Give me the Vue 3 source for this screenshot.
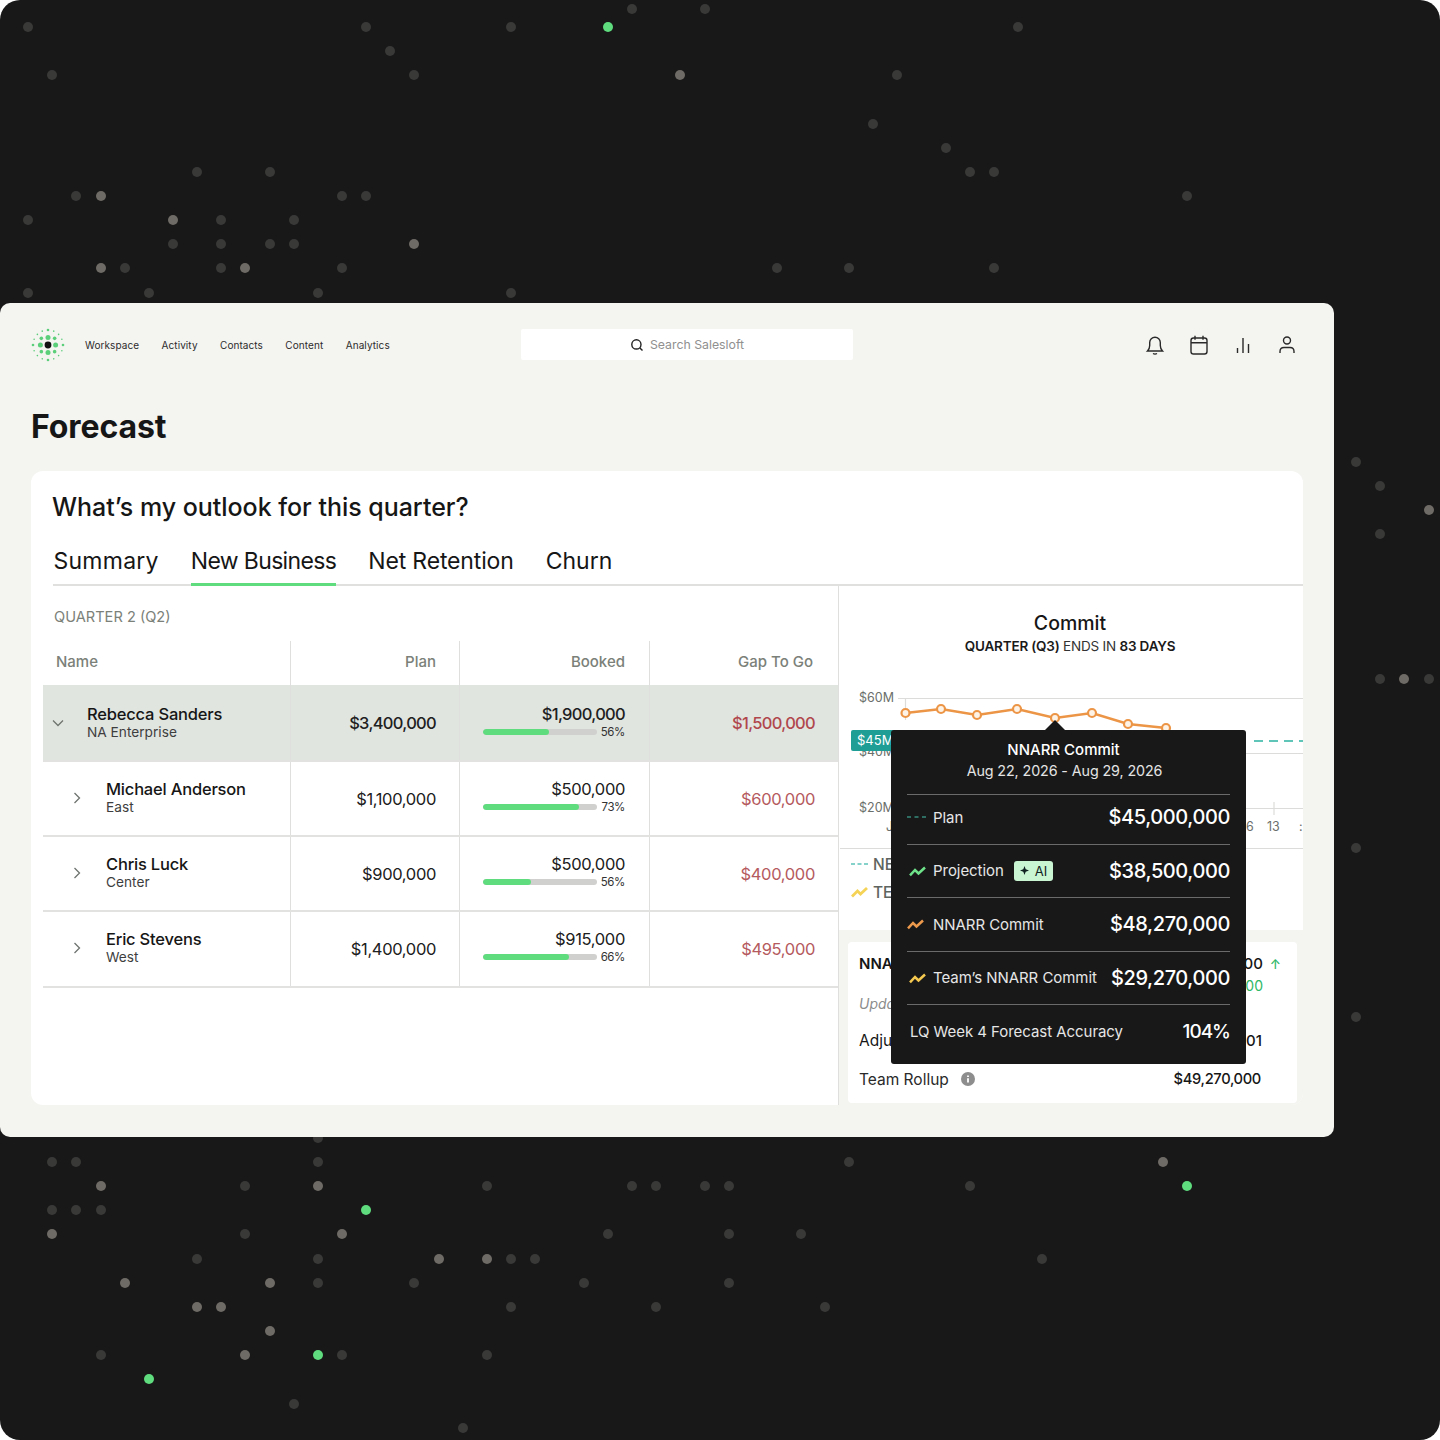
<script setup>
const green = '#5fdd7e'
const dim = [[28,27],[366,27],[511,27],[632,9],[705,9],[1018,27],[390,51],[52,75],[414,75],[897,75],[873,124],[946,148],[197,172],[270,172],[970,172],[994,172],[76,196],[342,196],[366,196],[1187,196],[28,220],[221,220],[294,220],[173,244],[221,244],[270,244],[294,244],[125,268],[221,268],[342,268],[777,268],[849,268],[994,268],[28,293],[149,293],[318,293],[511,293],[1356,462],[1380,486],[1380,534],[1380,679],[1429,679],[1356,848],[1356,1017],[318,1138],[52,1162],[76,1162],[318,1162],[849,1162],[245,1186],[487,1186],[632,1186],[656,1186],[705,1186],[729,1186],[970,1186],[52,1210],[76,1210],[101,1210],[245,1234],[608,1234],[729,1234],[801,1234],[197,1259],[318,1259],[511,1259],[535,1259],[1042,1259],[318,1283],[414,1283],[584,1283],[729,1283],[511,1307],[656,1307],[825,1307],[101,1355],[342,1355],[487,1355],[294,1404],[463,1428]]
const bright = [[680,75],[101,196],[173,220],[414,244],[101,268],[245,268],[1429,510],[1404,679],[1163,1162],[101,1186],[318,1186],[52,1234],[342,1234],[439,1259],[487,1259],[125,1283],[270,1283],[197,1307],[221,1307],[270,1331],[245,1355]]
const greens = [[608,27],[1187,1186],[366,1210],[318,1355],[149,1379]]
const dots = [
  ...dim.map(([x, y]) => ({ x, y, c: '#393938' })),
  ...bright.map(([x, y]) => ({ x, y, c: '#6e6a65' })),
  ...greens.map(([x, y]) => ({ x, y, c: green }))
]

const logoDots = []
for (let i = 0; i < 4; i++) {
  const a = i * Math.PI / 2
  logoDots.push({ x: 17 + 7.6 * Math.cos(a), y: 17 + 7.6 * Math.sin(a), r: 2.5 })
  const b = a + Math.PI / 4
  logoDots.push({ x: 17 + 9.4 * Math.cos(b), y: 17 + 9.4 * Math.sin(b), r: 1.8 })
}
for (let i = 0; i < 16; i++) {
  const a = i * Math.PI / 8
  logoDots.push({ x: 17 + 15 * Math.cos(a), y: 17 + 15 * Math.sin(a), r: i % 4 === 0 ? 1.3 : 0.8 })
}

const nav = ['Workspace', 'Activity', 'Contacts', 'Content', 'Analytics']
const tabs = ['Summary', 'New Business', 'Net Retention', 'Churn']
const rows = [
  { name: 'Rebecca Sanders', sub: 'NA Enterprise', plan: '$3,400,000', booked: '$1,900,000', pct: '56%', fill: 66, gap: '$1,500,000', lead: true },
  { name: 'Michael Anderson', sub: 'East', plan: '$1,100,000', booked: '$500,000', pct: '73%', fill: 96, gap: '$600,000' },
  { name: 'Chris Luck', sub: 'Center', plan: '$900,000', booked: '$500,000', pct: '56%', fill: 48, gap: '$400,000' },
  { name: 'Eric Stevens', sub: 'West', plan: '$1,400,000', booked: '$915,000', pct: '66%', fill: 86, gap: '$495,000' }
]
const points = [[905.5,713],[941,709],[977,715],[1017,709],[1055,718],[1092,713],[1128,724],[1166,728]]
const polyline = points.map(p => p.join(',')).join(' ')
const tipRows = [
  { label: 'Projection', value: '$38,500,000', color: '#6fe38a', nudge: true, ai: true },
  { label: 'NNARR Commit', value: '$48,270,000', color: '#ee9a4d' },
  { label: 'Team’s NNARR Commit', value: '$29,270,000', color: '#f5c94f', nudge: true }
]
</script>

<template>
  <div class="stage">
    <span v-for="(d, i) in dots" :key="i" class="dot" :style="{ left: d.x - 5 + 'px', top: d.y - 5 + 'px', background: d.c }"></span>

    <main class="window">
      <header class="topbar">
        <div class="brand">
          <svg width="34" height="34" viewBox="0 0 34 34" class="logo">
            <circle v-for="(d, i) in logoDots" :key="i" :cx="d.x" :cy="d.y" :r="d.r" fill="#5ccf7a" />
            <circle cx="17" cy="17" r="3.4" fill="#111" />
          </svg>
          <nav class="nav"><a v-for="n in nav" :key="n">{{ n }}</a></nav>
        </div>
        <div class="search">
          <svg width="14" height="14" viewBox="0 0 14 14" fill="none" stroke="#222" stroke-width="1.4"><circle cx="6.4" cy="6.4" r="4.6" /><path d="M9.9 9.9l2.6 2.6" /></svg>
          <span>Search Salesloft</span>
        </div>
        <div class="tools">
          <svg width="22" height="22" viewBox="0 0 22 22" fill="none" stroke="#2a2a2a" stroke-width="1.4"><path d="M3.5 17h15c-1.5-1.5-2.2-3-2.2-5.500V8.500a5.300 5.300 0 0 0-10.600 0v3C5.700 14 5 15.500 3.500 17z" /><path d="M9 19.500q2 1.200 4 0" /></svg>
          <svg width="22" height="22" viewBox="0 0 22 22" fill="none" stroke="#2a2a2a" stroke-width="1.4"><rect x="3" y="4" width="16" height="16" rx="2.5" /><path d="M3 8.800h16M7 1.800v4M15 1.800v4" /></svg>
          <svg width="22" height="22" viewBox="0 0 22 22" fill="none" stroke="#2a2a2a" stroke-width="1.4"><path d="M5.500 14v5M11 4v15M16.500 10v9" /></svg>
          <svg width="22" height="22" viewBox="0 0 22 22" fill="none" stroke="#2a2a2a" stroke-width="1.4"><circle cx="11" cy="6.500" r="3.500" /><path d="M4 19v-1.500q0-4 4-4h6q4 0 4 4V19" /></svg>
        </div>
      </header>

      <h1 class="title">Forecast</h1>

      <section class="card">
        <h2 class="question">What’s my outlook for this quarter?</h2>
        <div class="tabs">
          <span v-for="(t, i) in tabs" :key="t" class="tab" :class="{ active: i === 1 }">{{ t }}</span>
        </div>

        <div class="body">
          <div class="left">
            <div class="quarter">QUARTER 2 (Q2)</div>
            <div class="table">
              <div class="row head">
                <div class="cell name-head">Name</div>
                <div class="cell num">Plan</div>
                <div class="cell num booked-head">Booked</div>
                <div class="cell num gap-head">Gap To Go</div>
              </div>
              <div v-for="r in rows" :key="r.name" class="row" :class="{ lead: r.lead }">
                <div class="cell who">
                  <svg class="chev" width="12" height="12" viewBox="0 0 12 12" fill="none" stroke="#6f746f" stroke-width="1.3">
                    <path :d="r.lead ? 'M1 3.500l5 5 5-5' : 'M3.500 1l5 5-5 5'" />
                  </svg>
                  <div>
                    <div class="who-name">{{ r.name }}</div>
                    <div class="who-sub">{{ r.sub }}</div>
                  </div>
                </div>
                <div class="cell num money">{{ r.plan }}</div>
                <div class="cell booked">
                  <div class="money">{{ r.booked }}</div>
                  <div class="progress">
                    <div class="track"><div class="fill" :style="{ width: r.fill + 'px' }"></div></div>
                    <span class="pct">{{ r.pct }}</span>
                  </div>
                </div>
                <div class="cell num money gap">{{ r.gap }}</div>
              </div>
            </div>
          </div>

          <div class="right">
            <div class="chart-panel">
              <div class="chart-title">Commit</div>
              <div class="chart-sub"><b>QUARTER (Q3)</b> ENDS IN <b>83 DAYS</b></div>
              <svg class="chart" width="463" height="163" viewBox="840 685 463 163">
                <g stroke="#dcdcda" stroke-width="1.2">
                  <path d="M898 698.500H1303M898 753.500H1303M898 808.500H1303M905.500 698V720M1274 802v13" fill="none" />
                </g>
                <g class="axis">
                  <text x="859" y="702">$60M</text>
                  <text x="859" y="756">$40M</text>
                  <text x="859" y="812">$20M</text>
                  <text x="886" y="831">Jul</text>
                  <text x="1246" y="831">6</text>
                  <text x="1267" y="831">13</text>
                  <text x="1299" y="831">:</text>
                </g>
                <path d="M1254 741H1303" stroke="#2bb3a3" stroke-width="1.5" stroke-dasharray="9 6" />
                <rect x="851" y="730" width="46" height="21" rx="2" fill="#1f9e96" />
                <text x="857" y="745" class="badge-text">$45M</text>
                <polyline :points="polyline" fill="none" stroke="#ec9546" stroke-width="2.6" />
                <circle v-for="(p, i) in points" :key="i" :cx="p[0]" :cy="p[1]" r="4" fill="#fdf3e6" stroke="#ec9546" stroke-width="2.2" />
              </svg>
              <div class="legend">
                <div class="legend-row">
                  <svg width="18" height="12" viewBox="0 0 18 12"><path d="M0 6h18" stroke="#5cc3b8" stroke-width="1.5" stroke-dasharray="4 2.500" fill="none" /></svg>
                  <span>NEW</span>
                </div>
                <div class="legend-row">
                  <svg width="18" height="12" viewBox="0 0 18 12"><path d="M1 10.500L6.500 5l3 3L16 2" stroke="#f5d356" stroke-width="2.8" fill="none" /></svg>
                  <span>TEAM</span>
                </div>
              </div>
            </div>

            <div class="lower">
              <div class="summary">
                <div class="sum-row sum-head"><span>NNARR Commit</span><span class="sum-val">$48,270,000<i class="up">↑</i></span></div>
                <div class="sum-green">+$1,000,000</div>
                <div class="sum-updated">Updated</div>
                <div class="sum-row sum-adj"><span>Adjusted</span><span class="sum-v2">$48,270,001</span></div>
                <div class="sum-row sum-team">
                  <span class="team-label">Team Rollup
                    <svg width="14" height="14" viewBox="0 0 14 14"><circle cx="7" cy="7" r="7" fill="#8d8d8d" /><path d="M7 6.200v4.200M7 3.400v1.500" stroke="#fff" stroke-width="1.8" /></svg>
                  </span>
                  <span class="sum-v3">$49,270,000</span>
                </div>
              </div>
            </div>

            <div class="tooltip">
              <span class="tip-arrow"></span>
              <div class="tip-head">
                <div class="tip-title">NNARR Commit</div>
                <div class="tip-date">Aug 22, 2026 - Aug 29, 2026</div>
              </div>
              <div class="tip-row tip-first">
                <span class="tip-icon"><svg width="20" height="4" viewBox="0 0 20 4"><path d="M0 2h20" stroke="#43c2ac" stroke-width="1.2" stroke-dasharray="4 3.500" /></svg></span>
                <span class="tip-label">Plan</span>
                <span class="tip-val">$45,000,000</span>
              </div>
              <div v-for="t in tipRows" :key="t.label" class="tip-row">
                <span class="tip-icon" :class="{ nudge: t.nudge }">
                  <svg width="17" height="12" viewBox="0 0 17 12"><path d="M1 10.300L6 5l3.500 3.500L16 2.500" :stroke="t.color" stroke-width="2.5" fill="none" /></svg>
                </span>
                <span class="tip-label">{{ t.label }}</span>
                <span v-if="t.ai" class="ai">
                  <svg width="9" height="9" viewBox="0 0 9 9"><path d="M4.500 0l1.200 3.300L9 4.500 5.700 5.700 4.500 9 3.300 5.700 0 4.500l3.300-1.200z" fill="#122" /></svg>
                  AI
                </span>
                <span class="tip-val">{{ t.value }}</span>
              </div>
              <div class="tip-row tip-last">
                <span class="tip-label">LQ Week 4 Forecast Accuracy</span>
                <span class="tip-val tip-pct">104%</span>
              </div>
            </div>
          </div>
        </div>
      </section>
    </main>
  </div>
</template>

<style>
html, body { margin: 0; background: #fff; }
</style>

<style scoped>
.stage {
  position: relative;
  width: 1440px;
  height: 1440px;
  box-sizing: border-box;
  padding-top: 303px;
  background: #181818;
  border-radius: 20px;
  overflow: hidden;
  font-family: Inter, "Liberation Sans", sans-serif;
  color: #161616;
}
.dot { position: absolute; width: 10px; height: 10px; border-radius: 50%; }
.window {
  position: relative;
  width: 1334px;
  height: 834px;
  box-sizing: border-box;
  padding: 26px 0 0 31px;
  background: #f4f4f1;
  border-radius: 10px;
}
.topbar {
  display: grid;
  grid-template-columns: 490px 332px 1fr;
  grid-template-rows: 31px;
  height: 31px;
  align-items: center;
}
.brand { display: flex; align-items: center; gap: 20px; height: 31px; }
.logo { flex: none; margin: -2px 0; }
.nav { display: flex; gap: 22.4px; font-size: 10px; letter-spacing: 0.08px; color: #2c2c2c; }
.search {
  height: 31px;
  background: #fff;
  border-radius: 2px;
  display: flex;
  align-items: center;
  justify-content: center;
  gap: 6px;
  font-size: 12.3px;
  color: #909090;
}
.tools { display: flex; justify-content: flex-end; gap: 22px; padding-right: 36px; }
.title { margin: 47px 0 24px; height: 40px; font-size: 32px; line-height: 40px; font-weight: 700; letter-spacing: -0.1px; }
.card {
  width: 1272px;
  height: 634px;
  box-sizing: border-box;
  padding-top: 20px;
  background: #fff;
  border-radius: 12px;
  overflow: hidden;
}
.question { margin: 0 0 18px 21px; height: 32px; font-size: 25px; line-height: 32px; font-weight: 500; letter-spacing: -0.03px; }
.tabs { display: flex; gap: 32px; margin-left: 22px; height: 45px; padding-left: 0.5px; border-bottom: 2px solid #e0e0de; box-sizing: border-box; }
.tab { position: relative; font-size: 23px; line-height: 41px; font-weight: 400; }
.tab:first-child { letter-spacing: 0.25px; }
.tab:nth-child(3) { letter-spacing: -0.15px; }
.tab.active { letter-spacing: -0.65px; }
.tab.active::after { content: ""; position: absolute; left: 0; right: 0; bottom: -2px; height: 3px; background: #5fdd7e; }
.body { display: flex; height: 519px; }
.left { width: 808px; box-sizing: border-box; border-right: 1px solid #dfdfdd; padding-left: 12px; flex: none; }
.quarter { height: 55px; padding: 21px 0 0 11px; box-sizing: border-box; font-size: 14.6px; line-height: 20px; color: #7b8179; }
.row { display: grid; grid-template-columns: 248px 169px 190px 1fr; height: 75px; border-bottom: 2px solid #e2e2e0; box-sizing: border-box; }
.row:last-child { height: 76px; }
.row.head { height: 44px; border-bottom: 0; }
.row.lead { background: #e1e5e0; height: 77px; }
.cell { border-right: 1px solid #dfdfdd; display: flex; align-items: center; box-sizing: border-box; font-size: 15px; }
.cell:last-child { border-right: 0; }
.head .cell { font-size: 15px; font-weight: 500; color: #7b8179; padding-bottom: 3px; }
.name-head { padding-left: 13px; }
.num { justify-content: flex-end; padding-right: 23px; }
.booked-head { padding-right: 24px; }
.head .gap-head { padding-right: 25px; }
.who { gap: 23px; padding-left: 28px; padding-bottom: 2px; }
.chev { flex: none; }
.lead .who { padding: 0 0 0 9px; gap: 23px; }
.who-name { font-size: 16.5px; line-height: 18px; font-weight: 500; letter-spacing: -0.2px; }
.who-sub { font-size: 13.7px; line-height: 18px; color: #3e3e3e; }
.money { font-size: 16.5px; line-height: 20px; font-weight: 400; color: #202020; letter-spacing: -0.35px; }
.lead .money { font-weight: 500; letter-spacing: -0.7px; }
.gap.money { color: #b55a5e; }
.lead .gap.money { color: #b0474c; }
.booked { flex-direction: column; align-items: flex-end; justify-content: center; padding: 0 24px 5px 0; }
.lead .booked { padding-bottom: 3px; }
.booked .money { line-height: 21px; }
.progress { display: flex; align-items: center; gap: 4px; height: 14px; }
.track { width: 114px; height: 6px; border-radius: 3px; background: #d0d0cf; overflow: hidden; }
.fill { height: 6px; border-radius: 3px; background: #5fdd7e; }
.pct { font-size: 11.5px; line-height: 14px; color: #333; letter-spacing: -0.4px; }
.right { position: relative; flex: 1; min-width: 0; display: flex; flex-direction: column; }
.chart-panel { height: 344px; flex: none; padding-top: 26px; box-sizing: border-box; overflow: hidden; }
.chart-title { text-align: center; font-size: 19.5px; line-height: 23px; font-weight: 500; padding-right: 2px; }
.chart-sub { text-align: center; font-size: 13.5px; line-height: 22px; color: #333; letter-spacing: -0.2px; padding-right: 2px; }
.chart-sub b { font-weight: 600; color: #1a1a1a; }
.chart { display: block; margin-top: 28px; border-bottom: 1.5px solid #dcdcda; margin-left: 1px; }
.axis text { font-family: Inter, "Liberation Sans", sans-serif; font-size: 12.5px; fill: #6b6f6b; }
.badge-text { font-family: Inter, "Liberation Sans", sans-serif; font-size: 13px; fill: #fff; }
.legend { padding: 1px 0 0 12px; }
.legend-row { display: flex; align-items: center; gap: 4px; height: 28px; font-size: 15.5px; font-weight: 500; color: #5e6560; }
.lower { flex: 1; background: #f4f4f1; padding: 12px 6px 2px 9px; box-sizing: border-box; display: flex; }
.summary { flex: 1; background: #fff; border-radius: 4px; padding: 11px 34px 0 11px; box-sizing: border-box; position: relative; }
.sum-row { display: flex; justify-content: space-between; align-items: center; }
.sum-head { height: 20px; font-size: 15px; font-weight: 600; margin-right: -18px; }
.sum-val { font-weight: 500; }
.up { font-style: normal; color: #2eb866; font-size: 13px; margin-left: 7px; }
.sum-green { font-size: 14px; line-height: 20px; margin-top: 3px; color: #2eb866; text-align: right; }
.sum-updated { margin-top: -1px; font-size: 14px; line-height: 18px; font-style: italic; color: #8c8c8c; }
.sum-adj { margin-top: 17px; height: 20px; font-size: 15.5px; }
.sum-v2 { font-weight: 500; font-size: 15px; margin-right: 1px; }
.sum-team { margin-top: 19px; height: 20px; font-size: 15.5px; }
.team-label { display: flex; align-items: center; gap: 12px; color: #2a2a2a; }
.sum-v3 { font-size: 14.7px; font-weight: 500; letter-spacing: -0.35px; margin-right: 2px; }
.tooltip {
  position: absolute;
  left: 52px;
  top: 144px;
  width: 355px;
  height: 334px;
  box-sizing: border-box;
  padding: 0 16px;
  background: #181818;
  border-radius: 3px;
  color: #fff;
}
.tip-arrow {
  position: absolute;
  left: 154px;
  top: -10px;
  width: 0;
  height: 0;
  border-left: 10px solid transparent;
  border-right: 10px solid transparent;
  border-bottom: 10px solid #181818;
}
.tip-head { height: 65px; padding: 9px 8px 0 0; box-sizing: border-box; text-align: center; border-bottom: 1.5px solid #6a6a6a; }
.tip-title { font-size: 15px; line-height: 21px; font-weight: 500; padding-right: 2px; }
.tip-date { font-size: 14.3px; line-height: 21px; color: #e4e4e4; letter-spacing: -0.1px; }
.tip-row { display: flex; align-items: center; height: 53.5px; box-sizing: border-box; border-bottom: 1.5px solid #6a6a6a; }
.tip-first { height: 49.5px; padding-bottom: 4px; }
.tip-last { border-bottom: 0; height: 53px; padding-left: 3px; }
.tip-icon { width: 26px; flex: none; display: flex; align-items: center; }
.tip-icon.nudge { padding-left: 2px; width: 24px; }
.tip-label { font-size: 15px; letter-spacing: -0.05px; color: #e6e6e6; }
.tip-val { margin-left: auto; font-size: 20px; font-weight: 500; letter-spacing: -0.4px; }
.tip-pct { font-size: 19px; letter-spacing: -1px; }
.ai { display: flex; align-items: center; gap: 6px; height: 20px; padding: 0 6px; margin-left: 10px; font-size: 13px; background: #c9f5d3; color: #122; border-radius: 3px; }
</style>
